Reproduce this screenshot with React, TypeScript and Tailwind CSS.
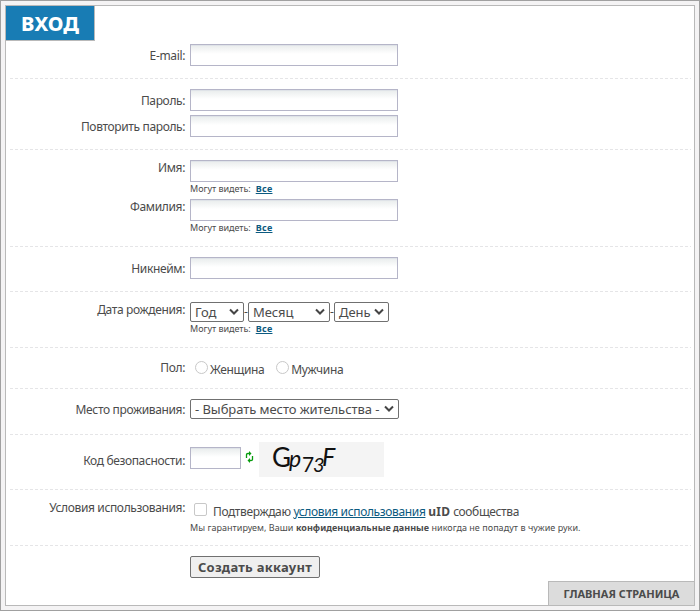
import * as React from "react";

const arrow = "pointer-events-none absolute right-[4px] top-[5px] h-[8px] w-[10px]";

function Divider() {
  return (
    <div className="mx-1 mr-[3px] h-px shrink-0 bg-[repeating-linear-gradient(90deg,#e5e5e7_0_3px,transparent_3px_5px)]" />
  );
}

function Section({ className, children }: { className: string; children: React.ReactNode }) {
  return (
    <>
      <section className={`shrink-0 ${className}`}>{children}</section>
      <Divider />
    </>
  );
}

function Row({
  label,
  className = "",
  labelClass = "pt-[5px]",
  children,
}: {
  label: string;
  className?: string;
  labelClass?: string;
  children: React.ReactNode;
}) {
  return (
    <div className={`flex items-start ${className}`}>
      <label className={`mr-[5px] w-[179px] shrink-0 whitespace-nowrap text-right ${labelClass}`}>{label}</label>
      <div>{children}</div>
    </div>
  );
}

function Field({ type = "text", width = "w-[208px]" }: { type?: string; width?: string }) {
  return (
    <input
      type={type}
      className={`block h-[22px] border border-[#b5b5c8] bg-[linear-gradient(180deg,#dfe3e8_0_1px,#ebeeee_1px,#ffffff_9px)] px-1 outline-none ${width}`}
    />
  );
}

function Visibility() {
  return (
    <div className="pt-px whitespace-nowrap text-[9px] leading-[11px] tracking-[-0.02px]">
      Могут видеть:
      <a href="#" className="ml-[5px] font-bold tracking-[0.3px] text-[#0c5a80] underline">Все</a>
    </div>
  );
}

function Select({ text, width }: { text: string; width: string }) {
  return (
    <div className={`relative h-[20px] rounded-[2px] border border-[#707070] bg-white pl-[4px] text-[13px] leading-[18px] tracking-[-0.06px] whitespace-nowrap ${width}`}>
      {text}
      <svg viewBox="0 0 10 8" className={arrow} fill="none" stroke="#454545" strokeWidth="2">
        <path d="M1 1.5 L5 5.5 L9 1.5" />
      </svg>
    </div>
  );
}

function Radio({ text }: { text: string }) {
  return (
    <label className="flex items-start">
      <span className="h-[13px] w-[13px] rounded-full border border-[#c8c8c8] bg-white" />
      <span className="ml-[2px] pt-[2px]">{text}</span>
    </label>
  );
}

function Captcha() {
  return (
    <svg width="125" height="35" viewBox="0 0 125 35" className="ml-[5px] bg-[#f4f4f4]" fill="#111" fontFamily="Lato, sans-serif" letterSpacing="0">
      <text x="13" y="25" fontSize="26">
        G
        <tspan x="30" y="25" fontSize="23" fontStyle="italic">p</tspan>
        <tspan x="43" y="30" fontSize="21">7</tspan>
        <tspan x="54" y="30" fontSize="20" fontStyle="italic">3</tspan>
        <tspan x="63" y="24" fontSize="25" fontStyle="italic">F</tspan>
      </text>
    </svg>
  );
}

export default function App() {
  return (
    <div className="h-[611px] w-[700px] border border-[#a0a0a0] bg-[#f4f3f4] p-1 font-['Noto_Sans',sans-serif] text-[12px] leading-[14px] tracking-[-0.36px] text-[#4b4b4b]">
      <main className="flex h-[601px] flex-col border border-[#b9b9b9] bg-white">
        <h1 className="h-[35px] w-[89px] shrink-0 border-r border-b border-[#b9b9b9] bg-[#187cb4] pl-[15px] text-[20px] leading-[35px] font-extrabold tracking-[0.1px] text-white">
          ВХОД
        </h1>
        <Section className="h-[37px] pt-[3px]">
          <Row label="E-mail:"><Field type="email" /></Row>
        </Section>
        <Section className="h-[70px] pt-[10px]">
          <Row label="Пароль:"><Field type="password" /></Row>
          <Row label="Повторить пароль:" className="mt-[4px]"><Field type="password" /></Row>
        </Section>
        <Section className="h-[96px] pt-[10px]">
          <Row label="Имя:" labelClass="pt-px"><Field /><Visibility /></Row>
          <Row label="Фамилия:" labelClass="pt-px" className="mt-[5px]"><Field /><Visibility /></Row>
        </Section>
        <Section className="h-[44px] pt-[10px]">
          <Row label="Никнейм:"><Field /></Row>
        </Section>
        <Section className="h-[55px] pt-[10px]">
          <Row label="Дата рождения:" labelClass="pt-px">
            <div className="flex items-center">
              <Select text="Год" width="w-[54px]" />
              <span className="w-[4px]">-</span>
              <Select text="Месяц" width="w-[82px]" />
              <span className="w-[4px]">-</span>
              <Select text="День" width="w-[55px]" />
            </div>
            <Visibility />
          </Row>
        </Section>
        <Section className="h-[40px] pt-[13px]">
          <Row label="Пол:" labelClass="">
            <div className="flex gap-[12px] pl-[5px]">
              <Radio text="Женщина" />
              <Radio text="Мужчина" />
            </div>
          </Row>
        </Section>
        <Section className="h-[45px] pt-[10px]">
          <Row label="Место проживания:" labelClass="pt-[4px]">
            <Select text="- Выбрать место жительства -" width="w-[209px]" />
          </Row>
        </Section>
        <Section className="h-[54px] pt-[7px]">
          <Row label="Код безопасности:" labelClass="pt-[12px]">
            <div className="flex items-start">
              <div className="pt-[5px]"><Field width="w-[51px]" /></div>
              <svg width="9" height="12" viewBox="0 0 9 12" className="mt-[9px] ml-[4px]" fill="none" stroke="#079b0d" strokeWidth="1.3">
                <path d="M1.5 7 V3.5 Q1.5 2.5 3 2.5 H4.5" />
                <path d="M4 0 V5 L6.5 2.5 Z" fill="#079b0d" stroke="none" />
                <path d="M7.5 5 V8.5 Q7.5 9.5 6 9.5 H4.5" />
                <path d="M5 7 V12 L2.5 9.5 Z" fill="#079b0d" stroke="none" />
              </svg>
              <Captcha />
            </div>
          </Row>
        </Section>
        <Section className="h-[55px] pt-[11px]">
          <Row label="Условия использования:" labelClass="">
            <label className="flex items-start pl-[4px] whitespace-nowrap">
              <span className="mt-[2px] h-[13px] w-[13px] rounded-[2px] border border-[#c8c8c8]" />
              <span className="ml-[6px] pt-[4px]">
                Подтверждаю <a href="#" className="text-[#0c5a80] underline">условия использования</a>{" "}
                <b className="tracking-[0.3px]">uID</b> сообщества
              </span>
            </label>
            <p className="whitespace-nowrap text-[9px] leading-[18px] tracking-[0.04px]">
              Мы гарантируем, Ваши <b>конфиденциальные данные</b> никогда не попадут в чужие руки.
            </p>
          </Row>
        </Section>
        <div className="flex shrink-0 pt-[10px] pl-[184px]">
          <button className="h-[22px] w-[130px] rounded-[2px] border border-[#707070] bg-[#efefef] text-[13px] leading-[20px] font-bold tracking-[0.25px] whitespace-nowrap">
            Создать аккаунт
          </button>
        </div>
        <footer className="mt-auto flex justify-end">
          <a href="#" className="h-[24px] w-[146px] border-t border-l border-[#b9b9b9] bg-[#dcdcdc] text-center text-[11px] leading-[24px] font-bold tracking-normal">
            ГЛАВНАЯ СТРАНИЦА
          </a>
        </footer>
      </main>
    </div>
  );
}
